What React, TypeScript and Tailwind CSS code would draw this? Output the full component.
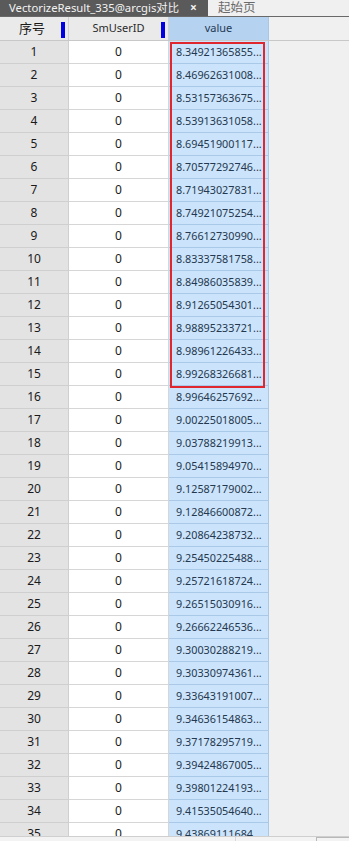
const values = [
  '8.34921365855...',
  '8.46962631008...',
  '8.53157363675...',
  '8.53913631058...',
  '8.69451900117...',
  '8.70577292746...',
  '8.71943027831...',
  '8.74921075254...',
  '8.76612730990...',
  '8.83337581758...',
  '8.84986035839...',
  '8.91265054301...',
  '8.98895233721...',
  '8.98961226433...',
  '8.99268326681...',
  '8.99646257692...',
  '9.00225018005...',
  '9.03788219913...',
  '9.05415894970...',
  '9.12587179002...',
  '9.12846600872...',
  '9.20864238732...',
  '9.25450225488...',
  '9.25721618724...',
  '9.26515030916...',
  '9.26662246536...',
  '9.30030288219...',
  '9.30330974361...',
  '9.33643191007...',
  '9.34636154863...',
  '9.37178295719...',
  '9.39424867005...',
  '9.39801224193...',
  '9.41535054640...',
  '9.43869111684...',
];

const font = { fontFamily: '"Noto Sans", "Noto Sans CJK SC", sans-serif' };

export default function App() {
  return (
    <div
      className="w-[349px] h-[841px] overflow-hidden bg-[#f0f0f0] flex flex-col text-[12px]"
      style={font}
    >
      {/* tabs */}
      <div className="flex h-[16px] shrink-0 overflow-hidden whitespace-nowrap">
        <div className="w-[208px] bg-[#5a5a5a] text-[#f2f2f2] flex items-center pl-[9px] leading-none">
          <span className="text-[11.3px]">VectorizeResult_335@arcgis对比</span>
          <span className="ml-[11px] text-[12px] font-bold">×</span>
        </div>
        <div className="flex-1 bg-[#f0f0f0] text-[#6a6a6a] flex items-center pl-[10px] text-[12.5px] leading-none">
          起始页
        </div>
      </div>
      <div className="h-[1px] bg-[#696969] shrink-0" />

      {/* table */}
      <div className="relative flex-1 overflow-hidden">
        <div className="flex h-[24px] border-b border-[#c8c8c8]">
          <div className="relative w-[69px] bg-[#eaeaea] border-r border-[#d0d0d0] flex items-center justify-center pr-[4px] text-[#1a1a1a] text-[13px]">
            序号
            <div className="absolute right-[3px] top-[5px] w-[4px] h-[16px] bg-[#0000e0]" />
          </div>
          <div className="relative w-[100px] bg-[#eaeaea] border-r border-[#d0d0d0] flex items-center justify-center text-[#2a2a2a] text-[11px]">
            SmUserID
            <div className="absolute right-[3px] top-[5px] w-[4px] h-[16px] bg-[#0000e0]" />
          </div>
          <div className="w-[100px] bg-[#b5d2f0] border-r border-[#a8c6e6] flex items-center justify-center text-[#243a55] text-[11px]">
            value
          </div>
        </div>

        {values.map((v, i) => (
          <div key={i} className="flex h-[23px]">
            <div className="w-[69px] bg-[#e3e3e3] border-r border-b border-[#cfcfcf] flex items-center justify-center text-[#1a1a1a]">
              {i + 1}
            </div>
            <div className="w-[100px] bg-white border-r border-b border-[#d6d6d6] flex items-center justify-center text-[#1a1a1a]">
              0
            </div>
            <div className="w-[100px] bg-[#cce4fb] border-r border-b border-[#aac8e8] flex items-center pl-[7px] text-[#24384f] text-[10.8px]">
              {v}
            </div>
          </div>
        ))}

        {/* red highlight annotation */}
        <div className="absolute left-[170px] top-[25px] w-[95px] h-[346px] border-2 border-[#e0262e]" />

        {/* bottom bar */}
        <div className="absolute left-0 right-0 bottom-0 h-[5px] bg-[#f3f3f3] border-t border-[#cfcfcf] flex">
          <div className="w-[236px] border-r border-[#d8d8d8]" />
          <div className="w-[80px]" />
          <div className="flex-1 border-l border-t border-[#b8b8b8]" />
        </div>
      </div>
    </div>
  );
}
